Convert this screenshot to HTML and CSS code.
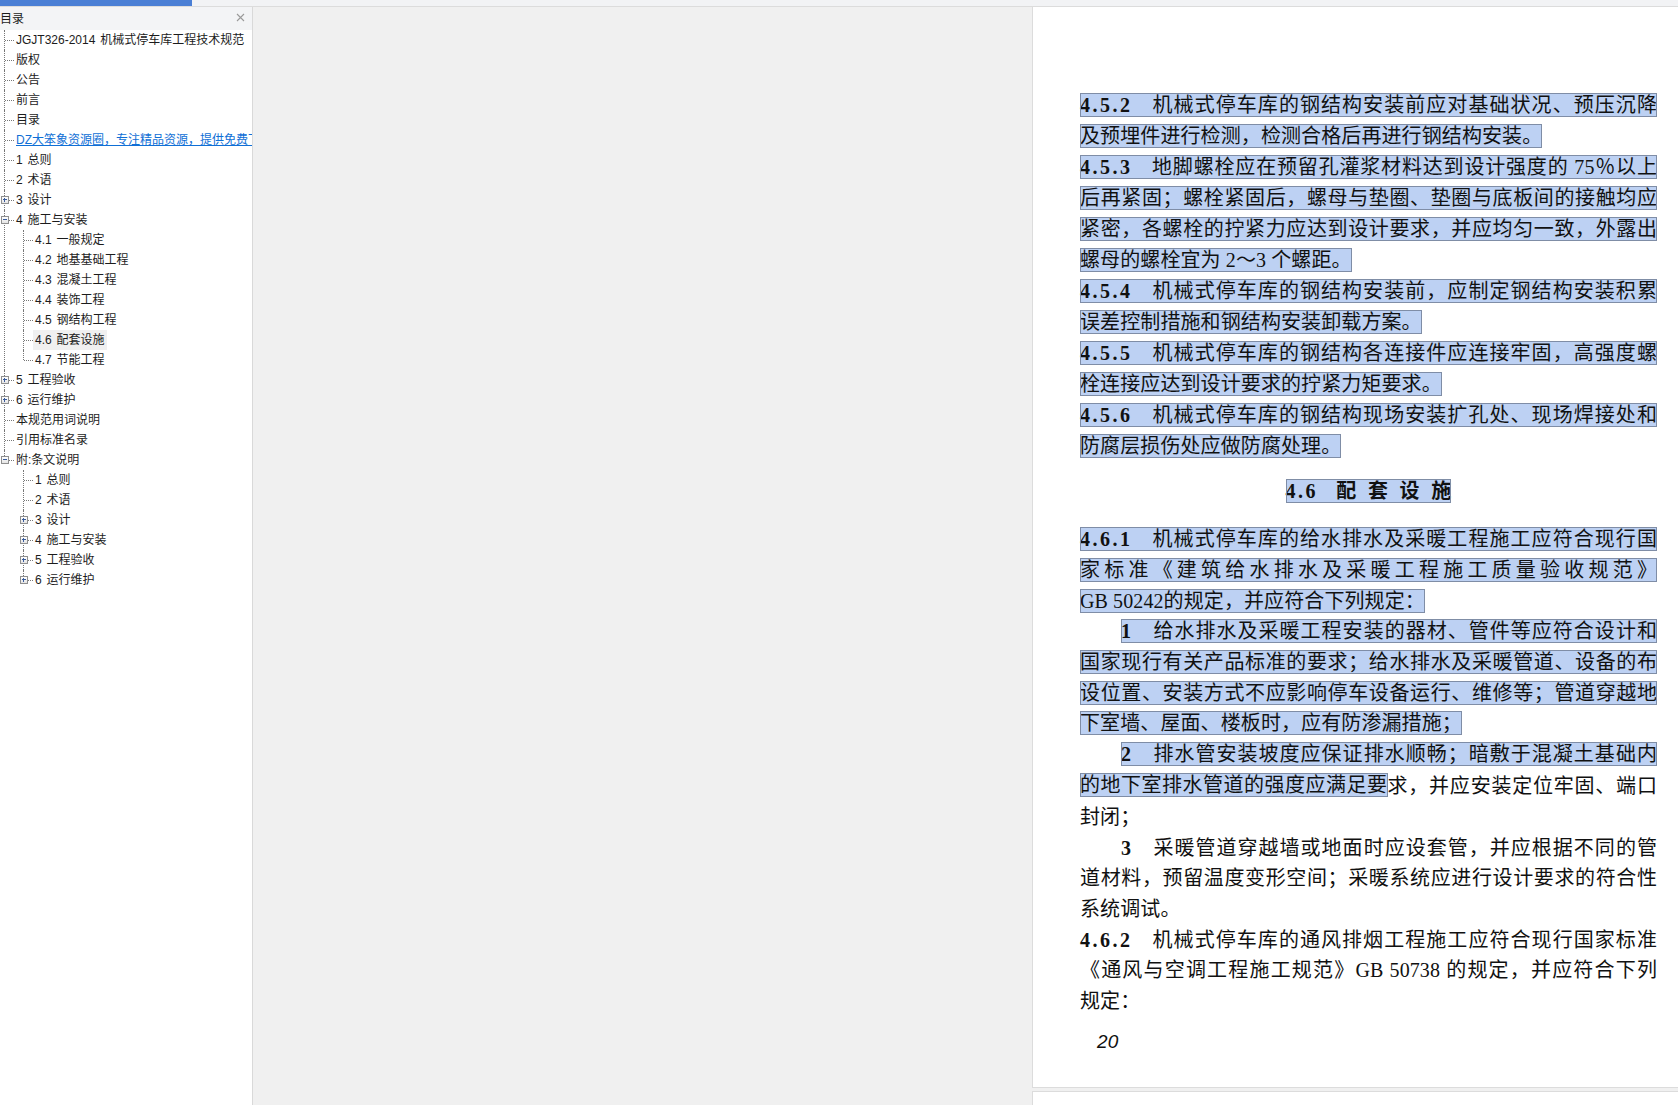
FILE: index.html
```html
<!DOCTYPE html>
<html lang="zh-CN">
<head>
    <meta charset="UTF-8">
    <title>JGJT326-2014 机械式停车库工程技术规范</title>
    <link rel="stylesheet" href="styles.css">
</head>
<body>

<!-- Loading bar -->
<div class="progress"><div class="progress-fill"></div></div>

<div class="workspace">

    <!-- Outline -->
    <aside class="outline">
        <div class="outline-title">
            <span>目录</span>
            <svg class="close" width="9" height="9" viewBox="0 0 9 9"><path d="M1 1l7 7M8 1l-7 7" stroke="#9a9a9a" stroke-width="1.1" fill="none"/></svg>
        </div>
        <ul class="tree">
            <li><div class="row"><i class="twig"></i><span class="label">JGJT326-2014 机械式停车库工程技术规范</span></div></li>
            <li><div class="row"><i class="twig"></i><span class="label">版权</span></div></li>
            <li><div class="row"><i class="twig"></i><span class="label">公告</span></div></li>
            <li><div class="row"><i class="twig"></i><span class="label">前言</span></div></li>
            <li><div class="row"><i class="twig"></i><span class="label">目录</span></div></li>
            <li><div class="row"><i class="twig"></i><span class="label link">DZ大笨象资源圈，专注精品资源，提供免费下载</span></div></li>
            <li><div class="row"><i class="twig"></i><span class="label">1 总则</span></div></li>
            <li><div class="row"><i class="twig"></i><span class="label">2 术语</span></div></li>
            <li><div class="row"><i class="toggle plus"></i><i class="twig"></i><span class="label">3 设计</span></div></li>
            <li>
                <div class="row"><i class="toggle"></i><i class="twig"></i><span class="label">4 施工与安装</span></div>
                <ul class="tree">
                    <li><div class="row"><i class="twig"></i><span class="label">4.1 一般规定</span></div></li>
                    <li><div class="row"><i class="twig"></i><span class="label">4.2 地基基础工程</span></div></li>
                    <li><div class="row"><i class="twig"></i><span class="label">4.3 混凝土工程</span></div></li>
                    <li><div class="row"><i class="twig"></i><span class="label">4.4 装饰工程</span></div></li>
                    <li><div class="row"><i class="twig"></i><span class="label">4.5 钢结构工程</span></div></li>
                    <li><div class="row"><i class="twig"></i><span class="label current">4.6 配套设施</span></div></li>
                    <li><div class="row"><i class="twig"></i><span class="label">4.7 节能工程</span></div></li>
                </ul>
            </li>
            <li><div class="row"><i class="toggle plus"></i><i class="twig"></i><span class="label">5 工程验收</span></div></li>
            <li><div class="row"><i class="toggle plus"></i><i class="twig"></i><span class="label">6 运行维护</span></div></li>
            <li><div class="row"><i class="twig"></i><span class="label">本规范用词说明</span></div></li>
            <li><div class="row"><i class="twig"></i><span class="label">引用标准名录</span></div></li>
            <li>
                <div class="row"><i class="toggle"></i><i class="twig"></i><span class="label">附:条文说明</span></div>
                <ul class="tree">
                    <li><div class="row"><i class="twig"></i><span class="label">1 总则</span></div></li>
                    <li><div class="row"><i class="twig"></i><span class="label">2 术语</span></div></li>
                    <li><div class="row"><i class="toggle plus"></i><i class="twig"></i><span class="label">3 设计</span></div></li>
                    <li><div class="row"><i class="toggle plus"></i><i class="twig"></i><span class="label">4 施工与安装</span></div></li>
                    <li><div class="row"><i class="toggle plus"></i><i class="twig"></i><span class="label">5 工程验收</span></div></li>
                    <li><div class="row"><i class="toggle plus"></i><i class="twig"></i><span class="label">6 运行维护</span></div></li>
                </ul>
            </li>
        </ul>
    </aside>

    <!-- Document view -->
    <main class="viewer">
        <section class="page">
            <div class="ln"><span class="sel full"><b>4.5.2</b>　机械式停车库的钢结构安装前应对基础状况、预压沉降</span></div>
            <div class="ln"><span class="sel">及预埋件进行检测，检测合格后再进行钢结构安装。</span></div>
            <div class="ln"><span class="sel full"><b>4.5.3</b>　地脚螺栓应在预留孔灌浆材料达到设计强度的 75％以上</span></div>
            <div class="ln"><span class="sel full">后再紧固；螺栓紧固后，螺母与垫圈、垫圈与底板间的接触均应</span></div>
            <div class="ln"><span class="sel full">紧密，各螺栓的拧紧力应达到设计要求，并应均匀一致，外露出</span></div>
            <div class="ln"><span class="sel">螺母的螺栓宜为 2～3 个螺距。</span></div>
            <div class="ln"><span class="sel full"><b>4.5.4</b>　机械式停车库的钢结构安装前，应制定钢结构安装积累</span></div>
            <div class="ln"><span class="sel">误差控制措施和钢结构安装卸载方案。</span></div>
            <div class="ln"><span class="sel full"><b>4.5.5</b>　机械式停车库的钢结构各连接件应连接牢固，高强度螺</span></div>
            <div class="ln"><span class="sel">栓连接应达到设计要求的拧紧力矩要求。</span></div>
            <div class="ln"><span class="sel full"><b>4.5.6</b>　机械式停车库的钢结构现场安装扩孔处、现场焊接处和</span></div>
            <div class="ln"><span class="sel">防腐层损伤处应做防腐处理。</span></div>

            <h2 class="section-head"><span class="sel"><b>4.6</b>　配 套 设 施</span></h2>

            <div class="clauses">
                <div class="ln"><span class="sel full"><b>4.6.1</b>　机械式停车库的给水排水及采暖工程施工应符合现行国</span></div>
                <div class="ln"><span class="sel full">家标准《建筑给水排水及采暖工程施工质量验收规范》</span></div>
                <div class="ln"><span class="sel">GB 50242的规定，并应符合下列规定：</span></div>
                <div class="ln indent"><span class="sel full"><b>1</b>　给水排水及采暖工程安装的器材、管件等应符合设计和</span></div>
                <div class="ln"><span class="sel full">国家现行有关产品标准的要求；给水排水及采暖管道、设备的布</span></div>
                <div class="ln"><span class="sel full">设位置、安装方式不应影响停车设备运行、维修等；管道穿越地</span></div>
                <div class="ln"><span class="sel">下室墙、屋面、楼板时，应有防渗漏措施；</span></div>
                <div class="ln indent"><span class="sel full"><b>2</b>　排水管安装坡度应保证排水顺畅；暗敷于混凝土基础内</span></div>
                <div class="ln"><span class="sel wide">的地下室排水管道的强度应满足要</span><span class="tail">求，并应安装定位牢固、端口</span></div>
                <div class="ln"><span>封闭；</span></div>
                <div class="ln indent"><span class="full"><b>3</b>　采暖管道穿越墙或地面时应设套管，并应根据不同的管</span></div>
                <div class="ln"><span class="full">道材料，预留温度变形空间；采暖系统应进行设计要求的符合性</span></div>
                <div class="ln"><span>系统调试。</span></div>
                <div class="ln"><span class="full"><b>4.6.2</b>　机械式停车库的通风排烟工程施工应符合现行国家标准</span></div>
                <div class="ln"><span class="full">《通风与空调工程施工规范》GB 50738 的规定，并应符合下列</span></div>
                <div class="ln"><span>规定：</span></div>
            </div>

            <div class="page-no">20</div>
        </section>
        <section class="page next"></section>
    </main>

</div>

</body>
</html>
```

FILE: styles.css
```css
* {
    box-sizing: border-box;
}

html, body {
    height: 100%;
}

body {
    margin: 0;
    overflow: hidden;
    display: flex;
    flex-direction: column;
    background-color: #f0f0f0;
    font-family: "Liberation Sans", "Noto Sans CJK SC", sans-serif;
}

/* top bar */
.progress {
    height: 7px;
    flex: none;
    background-color: #f2f3f5;
    border-bottom: 1px solid #dcdcdc;
}

.progress-fill {
    width: 192px;
    height: 6px;
    background-color: #4a7fd5;
}

.workspace {
    flex: 1;
    display: flex;
    min-height: 0;
}

/* outline */
.outline {
    width: 253px;
    flex: none;
    overflow: hidden;
    background-color: #fff;
    border-right: 1px solid #d9d9d9;
    font-size: 12px;
    word-spacing: 1.5px;
    color: #1c1c1c;
}

.outline-title {
    height: 23px;
    display: flex;
    align-items: center;
    justify-content: space-between;
    padding: 0 7px 2px 0;
    background-color: #f3f4f6;
}

.tree {
    list-style: none;
    margin: 0 0 0 4px;
    padding: 0;
}

.tree .tree {
    margin-left: 18px;
}

.tree li {
    position: relative;
    border-left: 1px dotted #777;
}

.tree li:last-child {
    border-left-color: transparent;
}

.tree li:last-child > .row::before {
    content: "";
    position: absolute;
    left: -1px;
    top: 0;
    height: 10px;
    border-left: 1px dotted #777;
}

.row {
    position: relative;
    height: 20px;
    display: flex;
    align-items: center;
    white-space: nowrap;
}

.twig {
    width: 9px;
    flex: none;
    border-top: 1px dotted #777;
    margin-right: 2px;
}

.label {
    line-height: 20px;
    padding: 0 1px 0 0;
}

.link {
    color: #0f6fd6;
    text-decoration: underline;
}

.current {
    background-color: #f0f0f0;
    padding: 0 2px;
    margin-left: -2px;
}

.toggle {
    position: absolute;
    left: -4px;
    top: 6px;
    width: 8px;
    height: 8px;
    background: linear-gradient(#fff, #e4e4e4);
    border: 1px solid #8f8f8f;
    z-index: 1;
}

.toggle::before {
    content: "";
    position: absolute;
    left: 1px;
    top: 2px;
    width: 4px;
    height: 1px;
    background-color: #3a5c9c;
}

.plus::after {
    content: "";
    position: absolute;
    left: 2px;
    top: 1px;
    width: 1px;
    height: 4px;
    background-color: #3a5c9c;
}

/* document */
.viewer {
    flex: 1;
    min-width: 0;
    padding-left: 779px;
    overflow: hidden;
}

.page {
    height: 1081px;
    padding: 82px 21px 0 47px;
    background-color: #fff;
    border-left: 1px solid #dcdcdc;
    border-bottom: 1px solid #dcdcdc;
    font-family: "Liberation Serif", "Noto Sans CJK SC", serif;
    font-size: 20px;
    letter-spacing: 0.1px;
    color: #111;
}

.page.next {
    height: 20px;
    margin-top: 3px;
    padding: 0;
    border-top: 1px solid #dcdcdc;
    border-bottom: 0;
}

.ln {
    height: 31px;
    display: flex;
    align-items: center;
    white-space: nowrap;
}

.clauses .ln {
    height: 30.69px;
}

.indent {
    padding-left: 41px;
}

.sel {
    background-color: #bdd1f3;
    outline: 1px solid #7f8da6;
    outline-offset: -1px;
    line-height: 24px;
    height: 24px;
}

.wide {
    letter-spacing: 0.5px;
}

.full {
    flex: 1;
    min-width: 0;
    text-align: justify;
    text-align-last: justify;
}

.tail {
    flex: 1;
    text-align: justify;
    text-align-last: justify;
}

.page b {
    font-weight: 700;
    letter-spacing: 2.5px;
    margin-right: -2px;
}

.section-head {
    height: 63px;
    margin: 0;
    padding-bottom: 4px;
    display: flex;
    align-items: center;
    justify-content: center;
    font-size: 20px;
    font-weight: 700;
    word-spacing: 6.5px;
}

.page-no {
    margin-top: 15px;
    padding-left: 17px;
    font-family: "Liberation Sans", sans-serif;
    font-style: italic;
    font-size: 19px;
    line-height: 24px;
}
```
